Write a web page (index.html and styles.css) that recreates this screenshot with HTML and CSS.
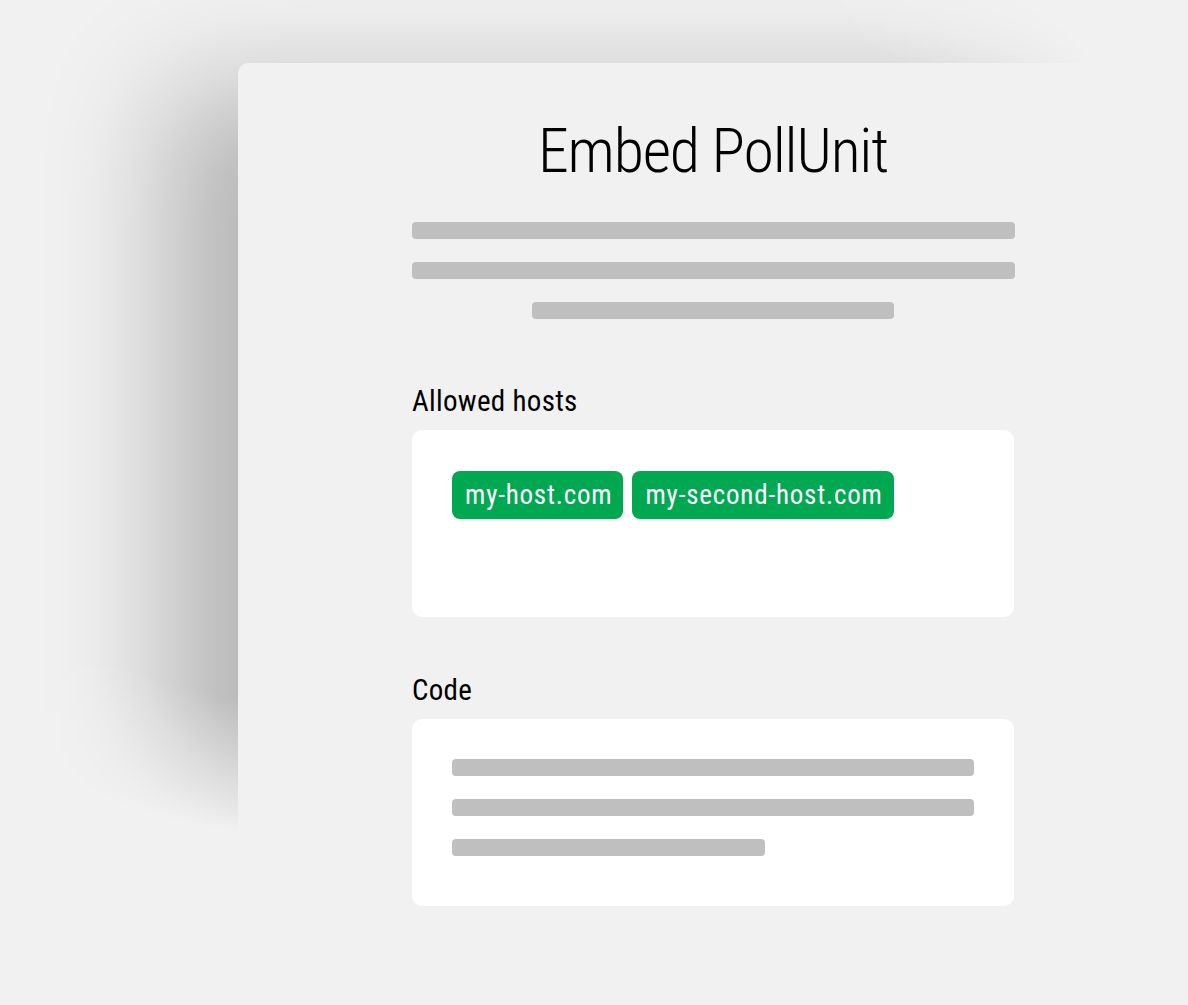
FILE: index.html
```html
<!DOCTYPE html>
<html lang="en">
<head>
<meta charset="utf-8">
<title>Embed PollUnit</title>
<link rel="stylesheet" href="styles.css">
</head>
<body>
<div class="stage">
  <div class="shadow-layer" aria-hidden="true">
    <div class="sheet"></div>
  </div>
  <main class="content">
    <h1 class="title">Embed PollUnit</h1>
    <div class="intro">
      <span class="bar bar-full"></span>
      <span class="bar bar-full"></span>
      <span class="bar bar-short"></span>
    </div>
    <section class="field">
      <h2 class="label">Allowed hosts</h2>
      <div class="box hosts">
        <span class="tag">my-host.com</span>
        <span class="tag">my-second-host.com</span>
      </div>
    </section>
    <section class="field field-code">
      <h2 class="label">Code</h2>
      <div class="box code">
        <span class="bar bar-code"></span>
        <span class="bar bar-code"></span>
        <span class="bar bar-code-short"></span>
      </div>
    </section>
  </main>
</div>
</body>
</html>
```

FILE: styles.css
```css
html, body {
  margin: 0;
  padding: 0;
}
body {
  background: #f1f1f1;
  overflow: hidden;
  font-family: "Roboto Condensed", "Liberation Sans Narrow", Roboto, "DejaVu Sans Condensed", sans-serif;
  color: #000;
}
.stage {
  display: grid;
  width: 1188px;
  height: 1005px;
  overflow: hidden;
}
.shadow-layer {
  grid-area: 1 / 1;
  box-sizing: border-box;
  height: 1005px;
  padding: 63px 0 0 238px;
  -webkit-mask-image: radial-gradient(775px 545px at 400px 300px, #000 76%, transparent 100%);
  mask-image: radial-gradient(775px 545px at 400px 300px, #000 76%, transparent 100%);
}
.sheet {
  height: 940px;
  width: 1300px;
  background: transparent;
  border-radius: 10px 0 0 0;
  box-shadow: -70px 28px 120px rgba(0, 0, 0, 0.25);
}
.content {
  grid-area: 1 / 1;
  position: relative;
  z-index: 1;
  width: 602px;
  padding-left: 412px;
  display: flex;
  flex-direction: column;
}
.title {
  margin: 115px 0 0;
  font-size: 62px;
  line-height: 72px;
  font-weight: 300;
  text-align: center;
  letter-spacing: -1.2px;
}
.intro {
  margin-top: 35px;
  display: flex;
  flex-direction: column;
  align-items: center;
  gap: 23px;
}
.bar {
  display: block;
  height: 17px;
  border-radius: 4px;
  background: #bfbfbf;
}
.bar-full { width: 603px; }
.bar-short { width: 362px; }
.field {
  margin-top: 65px;
  display: flex;
  flex-direction: column;
  gap: 12px;
}
.field-code {
  margin-top: 56px;
}
.label {
  margin: 0;
  font-size: 29px;
  line-height: 34px;
  font-weight: 400;
  letter-spacing: 0.3px;
}
.box {
  box-sizing: border-box;
  height: 187px;
  background: #fff;
  border-radius: 10px;
  padding: 41px 40px;
}
.hosts {
  display: flex;
  align-items: flex-start;
  gap: 9px;
}
.tag {
  display: inline-flex;
  align-items: center;
  height: 48px;
  padding: 0 11px 0 13px;
  border-radius: 8px;
  background: #00a852;
  color: #fff;
  font-size: 27px;
  letter-spacing: 0.8px;
}
.code {
  padding-top: 40px;
  display: flex;
  flex-direction: column;
  gap: 23px;
}
.bar-code { width: 522px; }
.bar-code-short { width: 313px; }
```
